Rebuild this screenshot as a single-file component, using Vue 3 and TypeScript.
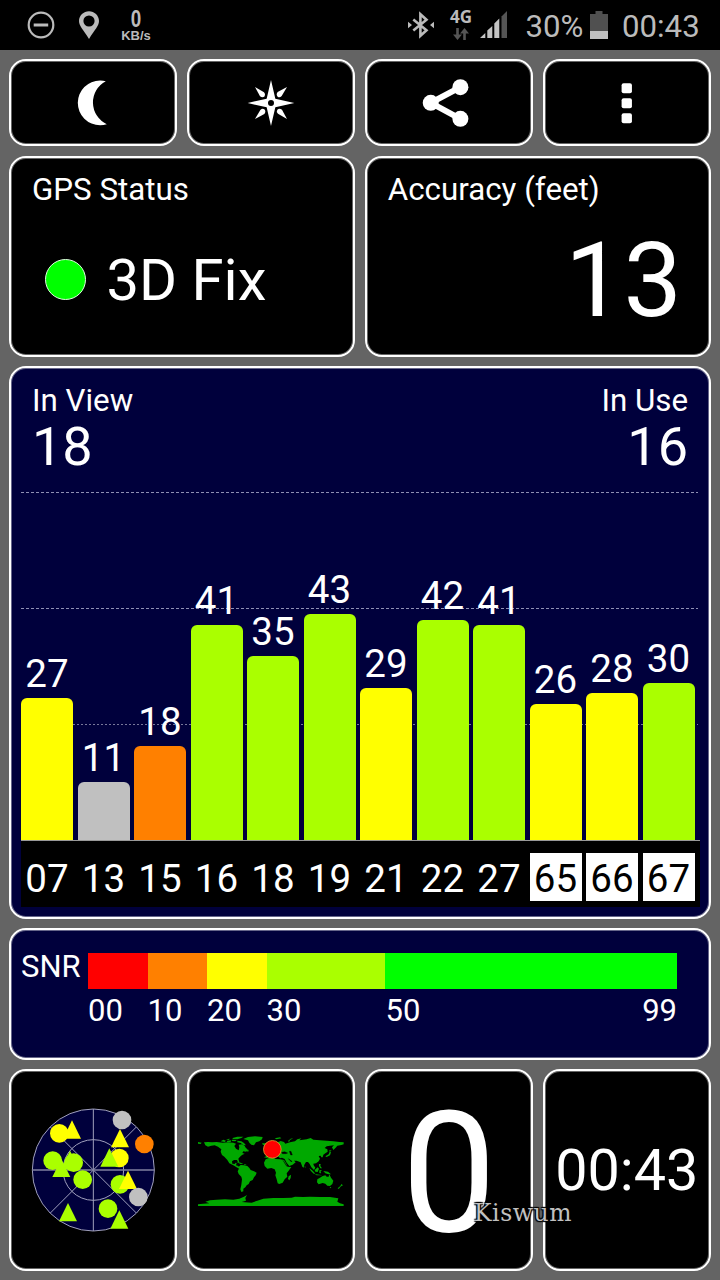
<script setup lang="ts">
interface Satellite {
  id: string
  snr: number
  square?: boolean
}

interface Marker {
  x: number
  y: number
  color: string
  shape: 'circle' | 'triangle'
}

const LIME = '#aaff00'
const YELLOW = '#ffff00'
const ORANGE = '#ff8000'
const GREY = '#c0c0c0'

const satellites: Satellite[] = [
  { id: '07', snr: 27 },
  { id: '13', snr: 11 },
  { id: '15', snr: 18 },
  { id: '16', snr: 41 },
  { id: '18', snr: 35 },
  { id: '19', snr: 43 },
  { id: '21', snr: 29 },
  { id: '22', snr: 42 },
  { id: '27', snr: 41 },
  { id: '65', snr: 26, square: true },
  { id: '66', snr: 28, square: true },
  { id: '67', snr: 30, square: true },
]

function barColor(s: Satellite): string {
  if (s.id === '13') return GREY
  if (s.snr < 20) return ORANGE
  return s.snr < 30 ? YELLOW : LIME
}

function barHeight(s: Satellite): string {
  return `${(s.snr * 5.25).toFixed(1)}px`
}

const scale = [
  { label: '00', span: 10, color: '#ff0000' },
  { label: '10', span: 10, color: ORANGE },
  { label: '20', span: 10, color: YELLOW },
  { label: '30', span: 20, color: LIME },
  { label: '50', span: 49, color: '#00ff00' },
]

const markers: Marker[] = [
  { x: 178, y: 220, color: YELLOW, shape: 'circle' },
  { x: 216, y: 181, color: YELLOW, shape: 'triangle' },
  { x: 366, y: 180, color: GREY, shape: 'circle' },
  { x: 360, y: 207, color: YELLOW, shape: 'triangle' },
  { x: 433, y: 252, color: ORANGE, shape: 'circle' },
  { x: 358, y: 294, color: YELLOW, shape: 'circle' },
  { x: 328, y: 265, color: LIME, shape: 'triangle' },
  { x: 158, y: 302, color: LIME, shape: 'circle' },
  { x: 210, y: 272, color: LIME, shape: 'triangle' },
  { x: 221, y: 308, color: LIME, shape: 'circle' },
  { x: 184, y: 296, color: LIME, shape: 'triangle' },
  { x: 248, y: 359, color: LIME, shape: 'circle' },
  { x: 360, y: 373, color: LIME, shape: 'circle' },
  { x: 384, y: 332, color: YELLOW, shape: 'triangle' },
  { x: 415, y: 411, color: GREY, shape: 'circle' },
  { x: 204, y: 429, color: LIME, shape: 'triangle' },
  { x: 324, y: 446, color: LIME, shape: 'circle' },
  { x: 358, y: 451, color: LIME, shape: 'triangle' },
]

function triangle(m: Marker): string {
  return `${m.x},${m.y} ${m.x - 27},${m.y + 55} ${m.x + 27},${m.y + 55}`
}
</script>

<template>
  <div class="screen">
    <header class="status">
      <svg class="dnd" width="28" height="28" viewBox="0 0 28 28">
        <circle cx="14" cy="14" r="12.3" fill="none" stroke="#bbb" stroke-width="2.2" />
        <path d="M6.7 14H21.2" stroke="#bbb" stroke-width="3" />
      </svg>
      <svg class="pin" width="20" height="28" viewBox="0 0 20 28">
        <path
          fill="#bbb"
          fill-rule="evenodd"
          d="M10 0.3C4.6 0.3 0 4.6 0 10C0 15 4 18 10 28C16 18 20 15 20 10C20 4.6 15.4 .3 10 .3ZM10 4.4A5.6 5.6 0 1 1 10 15.6A5.6 5.6 0 1 1 10 4.4Z"
        />
      </svg>
      <div class="speed"><b>0</b><span>KB/s</span></div>
      <svg class="bt" width="28" height="28" viewBox="0 0 28 28">
        <path d="M6.3 8.4L19.5 19.2L13.4 24.8V3.2L19.5 8.8L6.3 19.6" fill="none" stroke="#bbb" stroke-width="2.6" />
        <path d="M1 10.8L5 14L1 17.2ZM27 10.8L23 14L27 17.2Z" fill="#bbb" />
      </svg>
      <div class="net">
        <span>4G</span>
        <svg width="16" height="12" viewBox="0 0 16 12">
          <path d="M4.5 0V8M11.5 12V4" stroke="#555" stroke-width="2.6" />
          <path d="M0 6.5H9L4.5 12ZM7 5.5H16L11.5 0Z" fill="#555" />
        </svg>
      </div>
      <svg class="signal" width="28" height="28" viewBox="0 0 28 28">
        <path d="M0 27L5.3 22V27ZM7.3 27V19.5L12.3 15V27ZM14.3 27V12.5L19.3 7.5V27Z" fill="#c4c4c4" />
        <path d="M21.5 27V5.5L27 0V27Z" fill="#555" />
      </svg>
      <span class="pct">30%</span>
      <svg class="battery" width="18" height="28" viewBox="0 0 18 28">
        <path d="M0 3H5.5V0H12.5V3H18V20H0Z" fill="#505050" />
        <path d="M0 20H18V28H0Z" fill="#c0c0c0" />
      </svg>
      <span class="clock">00:43</span>
    </header>

    <main class="grid">
      <button class="card icon" aria-label="Night mode">
        <svg width="60" height="60" viewBox="189.6 217.5 180 180">
          <path d="M318 242Q310 240 301 240A67 67 0 0 0 301 374Q311 374 321 371A72 72 0 0 1 318 242Z" fill="#fff" />
        </svg>
      </button>
      <button class="card icon" aria-label="Compass">
        <svg width="60" height="60" viewBox="-90 -90 180 180">
          <path
            fill="#fff"
            fill-rule="evenodd"
            d="M0 -69L13 -13L70 0L13 13L0 69L-13 13L-70 0L-13 -13ZM0 -9A9 9 0 1 0 0 9A9 9 0 1 0 0 -9Z"
          />
          <path
            v-for="a in [0, 90, 180, 270]"
            :key="a"
            :transform="`rotate(${a})`"
            fill="#fff"
            d="M-48 -48L-21 -32Q-15 -26 -19 -20Q-25 -14 -33 -20Z"
          />
        </svg>
      </button>
      <button class="card icon" aria-label="Share">
        <svg width="60" height="60" viewBox="176.8 217.5 180 180">
          <path d="M301 260L212 307L301 355" fill="none" stroke="#fff" stroke-width="18" />
          <circle cx="212" cy="307" r="24" fill="#fff" />
          <circle cx="301" cy="260" r="24" fill="#fff" />
          <circle cx="301" cy="355" r="24" fill="#fff" />
        </svg>
      </button>
      <button class="card icon" aria-label="Menu">
        <svg width="60" height="60" viewBox="710.2 217.5 180 180">
          <rect v-for="y in [248, 293, 338]" :key="y" x="784" :y="y" width="31" height="30.5" rx="6" fill="#fff" />
        </svg>
      </button>

      <section class="card half">
        <h2>GPS Status</h2>
        <div class="fix">
          <i class="lamp"></i>
          <span>3D Fix</span>
        </div>
      </section>
      <section class="card half">
        <h2>Accuracy (feet)</h2>
        <div class="accuracy">13</div>
      </section>

      <section class="card navy chart">
        <div class="counts">
          <div><h2>In View</h2><strong>18</strong></div>
          <div class="right"><h2>In Use</h2><strong>16</strong></div>
        </div>
        <div class="plot">
          <svg class="lines" width="679" height="349" viewBox="0 0 679 349">
            <path d="M0 .5H677M0 116.5H677" stroke="#8f8fb4" stroke-dasharray="3 2" />
            <path d="M0 232.5H677" stroke="#77779a" stroke-dasharray="2 2" />
          </svg>
          <div v-for="s in satellites" :key="s.id" class="column">
            <span>{{ s.snr }}</span>
            <div class="bar" :style="{ height: barHeight(s), background: barColor(s) }"></div>
          </div>
        </div>
        <div class="ids">
          <span v-for="s in satellites" :key="s.id" :class="{ square: s.square }">{{ s.id }}</span>
        </div>
      </section>

      <section class="card navy snr">
        <span class="name">SNR</span>
        <div class="scale">
          <div v-for="z in scale" :key="z.label" class="zone" :style="{ flexGrow: z.span }">
            <div class="swatch" :style="{ background: z.color }"></div>
            <div class="ticks"><span>{{ z.label }}</span><span v-if="z.label === '50'">99</span></div>
          </div>
        </div>
      </section>

      <section class="card tile">
        <svg width="134" height="134" viewBox="78 129 402 402">
          <circle cx="280" cy="330" r="183" fill="#00003c" stroke="#a0a0bc" stroke-width="3" />
          <circle cx="280" cy="330" r="91" fill="none" stroke="#a0a0bc" stroke-width="3" />
          <path d="M280 147V513M151 201L409 459M151 459L409 201" stroke="#a0a0bc" stroke-width="3" />
          <path d="M97 330H463" stroke="#8080a0" stroke-width="5" />
          <template v-for="(m, i) in markers" :key="i">
            <circle v-if="m.shape === 'circle'" :cx="m.x" :cy="m.y" r="28" :fill="m.color" />
            <polygon v-else :points="triangle(m)" :fill="m.color" />
          </template>
        </svg>
      </section>
      <section class="card tile">
        <svg class="map" width="146" height="72" viewBox="54 75 438 216">
          <g fill="#00a800">
            <path d="M54 96L65 98L62 102L54 101ZM72 97L84 96L96 97L110 96L128 98L145 97L160 98L168 101L163 108L168 116L176 121L178 112L176 104L186 103L194 107L196 112L204 120L198 125L190 124L187 129L194 131L186 135L180 140L175 146L178 157L174 157L171 150L162 150L156 154L157 161L164 162L167 158L170 159L168 166L175 168L178 174L183 176L172 173L160 166L148 160L142 150L133 140L126 135L122 125L124 118L114 110L104 106L94 107L84 110L76 106Z" />
            <path d="M176 170L182 165L192 166L202 168L208 174L212 180L222 184L230 188L227 196L222 202L218 210L210 214L206 222L200 226L196 232L190 236L190 244L184 246L181 238L184 224L186 208L184 200L176 192L173 184L176 178Z" />
            <path d="M190 87L204 81L225 79L248 81L246 88L238 94L228 97L222 106L214 104L208 98L204 91Z" />
            <path d="M122 94L130 89L138 92L134 96ZM138 88L150 86L146 90ZM142 92L154 91L152 96L140 96ZM156 89L170 90L166 94L156 93ZM158 84L172 80L190 80L184 84L172 88L158 87ZM172 92L184 94L192 99L198 106L190 105L182 99L172 97ZM170 155L182 158L190 161L182 162L174 158ZM192 162L200 164L194 166ZM196 122L206 119L205 125Z" />
            <path d="M252 142L260 138L262 130L272 124L284 120L290 112L284 108L290 98L302 93L312 96L316 101L330 97L345 94L352 88L364 85L358 91L380 88L392 84L400 89L420 91L440 92L460 94L478 96L491 97L491 103L484 105L472 107L467 113L460 120L456 112L462 106L450 107L440 109L434 114L442 118L443 125L436 130L430 134L428 142L424 142L422 137L416 138L420 146L416 154L408 160L400 161L401 166L406 173L402 180L394 172L389 162L384 156L378 156L373 164L371 173L367 170L362 157L350 152L342 152L347 157L338 164L328 168L320 158L314 147L306 143L300 145L296 140L290 139L280 132L268 138L262 144Z" />
            <path d="M257 148L266 144L280 142L286 147L300 148L312 150L318 160L323 170L334 171L326 182L320 190L322 200L314 208L308 218L298 222L293 220L290 208L286 196L288 188L284 178L274 174L262 176L254 168L252 158Z" />
            <path d="M326 199L333 194L332 204L328 211L324 207ZM412 208L420 203L428 198L436 196L440 200L446 200L448 193L453 203L460 212L457 222L450 228L442 227L436 221L428 219L416 223L411 217ZM449 231L454 231L451 235ZM484 222L489 226L483 229L476 237L473 235L481 228Z" />
            <path d="M388 174L398 182L406 191L401 191L392 182ZM404 180L413 172L417 176L413 186L406 185ZM418 181L426 180L422 184L423 190L418 189ZM430 183L444 185L453 193L446 193L436 190ZM404 192L418 194L428 196L410 196ZM417 162L422 162L421 168L426 175L421 175L417 168ZM436 139L446 133L449 125L453 127L450 136L440 141ZM448 120L455 122L449 125ZM246 100L257 100L258 104L249 105ZM284 85L300 82L304 85L290 88ZM324 93L332 86L340 85L330 90L327 96ZM374 168L377 171L375 174Z" />
            <path d="M54 288V283L70 281L88 280L76 275L90 271L110 269L135 268L160 269L178 266L192 260L201 255L196 264L198 272L185 276L215 278L232 272L250 266L280 264L310 264L335 263L345 260L370 261L390 260L420 261L450 261L475 265L472 275L480 280L491 283V288Z" />
          </g>
          <path d="M305 127L314 125L323 129L318 131L307 131ZM328 124L333 124L337 135L332 135ZM309 151L319 167L322 170ZM325 146L336 154L334 156Z" fill="#000" stroke="#000" />
          <circle cx="277" cy="118" r="26.5" fill="#f00" stroke="#e09a30" stroke-width="2.5" />
        </svg>
      </section>
      <section class="card tile speedo">0</section>
      <section class="card tile time">00:43</section>
    </main>
    <div class="signature">Kiswum</div>
  </div>
</template>

<style>
body {
  margin: 0;
  background: #646464;
}
</style>

<style scoped>
.screen {
  position: relative;
  width: 720px;
  height: 1280px;
  overflow: hidden;
  background: #646464;
  color: #fff;
  font-family: Roboto, "Liberation Sans", sans-serif;
}
.status {
  display: flex;
  height: 50px;
  box-sizing: border-box;
  padding: 11px 0 0 26.5px;
  background: #000;
  color: #bbb;
  font-size: 31.2px;
  line-height: 31px;
  white-space: nowrap;
}
.status > * {
  flex: none;
}
.pin {
  margin-left: 24px;
}
.speed {
  width: 32px;
  margin-left: 21.5px;
  text-align: center;
  font: bold 13px "Liberation Sans", sans-serif;
}
.speed b {
  display: block;
  height: 17px;
  font-size: 23px;
  line-height: 16px;
  transform: scaleX(0.82);
}
.speed span {
  display: block;
  line-height: 15px;
}
.bt {
  margin-left: 255px;
}
.net {
  width: 24px;
  margin-left: 14px;
  text-align: center;
}
.net span {
  display: block;
  font: bold 17px/16px "Noto Sans", sans-serif;
  margin-top: -2px;
}
.net svg {
  display: block;
  margin: 3px 0 0 4px;
}
.signal {
  margin-left: 7px;
}
.pct {
  width: 59px;
  margin-left: 17.5px;
}
.battery {
  margin-left: 5.5px;
}
.clock {
  margin-left: 14px;
}
.grid {
  display: grid;
  grid-template-columns: repeat(4, 1fr);
  grid-template-rows: 87px 201px 552.5px 131.5px 202px;
  gap: 9.5px;
  padding: 9px;
}
.card {
  box-sizing: border-box;
  min-width: 0;
  margin: 0;
  padding: 0;
  border: 2px solid #fff;
  border-radius: 17px;
  background: #000;
  box-shadow: inset 0 0 0 1px rgba(255, 255, 255, 0.4);
  color: #fff;
  font-family: inherit;
}
.icon,
.tile {
  display: flex;
  align-items: center;
  justify-content: center;
}
h2 {
  margin: 0;
  font-size: 31.3px;
  font-weight: 400;
  line-height: 36px;
}
.half {
  grid-column: span 2;
  padding: 14.5px 27px 0 21px;
}
.fix {
  display: flex;
  align-items: center;
  margin: 36.5px 0 0 13px;
  font-size: 58px;
  line-height: 68px;
}
.fix span {
  padding-top: 1px;
}
.lamp {
  width: 39px;
  height: 39px;
  margin-right: 20.5px;
  border: 1px solid #dfffdf;
  border-radius: 50%;
  background: #0f0;
}
.accuracy {
  margin-top: 20px;
  font-size: 104px;
  line-height: 106px;
  text-align: right;
}
.navy {
  grid-column: span 4;
  background: #00003c;
}
.chart {
  padding: 14px 9px 0 10px;
}
.counts {
  display: flex;
  box-sizing: border-box;
  justify-content: space-between;
  height: 110px;
  padding: 1px 12px 0 11px;
}
.right {
  text-align: right;
}
strong {
  display: block;
  font-size: 54px;
  font-weight: 400;
  line-height: 55px;
}
.plot,
.ids {
  display: flex;
  gap: 4.5px;
}
.plot {
  position: relative;
  height: 348px;
  align-items: flex-end;
}
.lines {
  position: absolute;
  top: 0;
  left: 0;
}
.column {
  position: relative;
  width: 52px;
  text-align: center;
  font-size: 38.5px;
  line-height: 46px;
}
.column span {
  display: block;
  height: 47px;
}
.bar {
  border-radius: 6px 6px 0 0;
}
.ids {
  box-sizing: border-box;
  width: 679px;
  height: 67px;
  padding-top: 12px;
  border-top: 1px solid #999;
  background: #000;
  font-size: 38.5px;
  line-height: 51px;
  text-align: center;
}
.ids span {
  width: 52px;
  height: 48px;
}
.ids .square {
  background: #fff;
  color: #000;
}
.snr {
  display: flex;
  padding: 23px 32px 0 10px;
  font-size: 31px;
}
.name {
  width: 67px;
  line-height: 27px;
}
.scale {
  display: flex;
  flex: 1;
}
.zone {
  flex: 1 1 0;
  min-width: 0;
}
.swatch {
  height: 36px;
}
.ticks {
  display: flex;
  justify-content: space-between;
  line-height: 44px;
}
.map {
  margin-top: 2px;
}
.speedo {
  padding-top: 5px;
  font-size: 169px;
  line-height: 190px;
}
.time {
  font-size: 57.5px;
}
.signature {
  position: absolute;
  top: 1198px;
  left: 474px;
  color: #c0c0c0;
  font: 23.5px/30px "DejaVu Serif", serif;
  letter-spacing: 0.55px;
  text-shadow: 1px 1px 1px #000, -1px -1px 1px #000, 1px -1px 1px #000, -1px 1px 1px #000;
}
</style>
